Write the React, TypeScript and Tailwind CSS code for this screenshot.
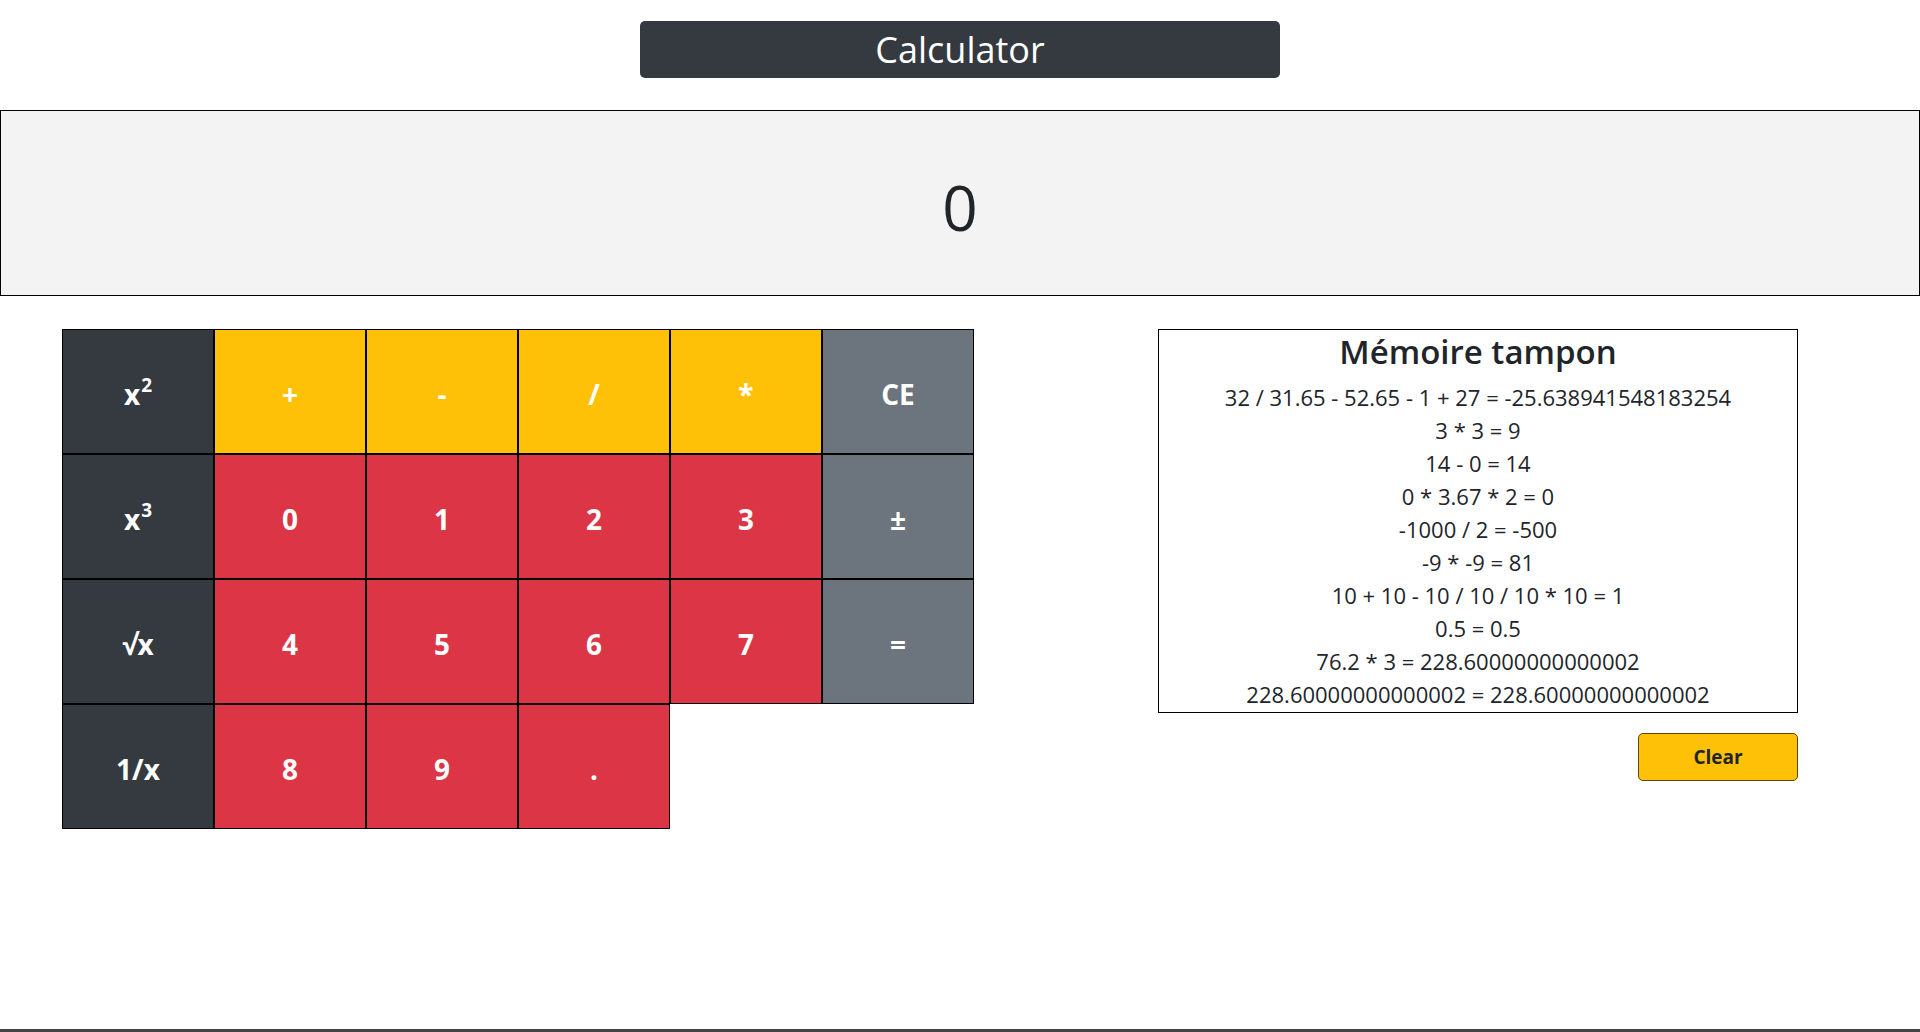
import type { ReactNode } from 'react';

type Key = { label: ReactNode; tone: 'dark' | 'yellow' | 'red' | 'gray' };

const toneClass: Record<Key['tone'], string> = {
  dark: 'bg-[#343a40]',
  yellow: 'bg-[#ffc107]',
  red: 'bg-[#dc3545]',
  gray: 'bg-[#6c757d]',
};

const Pow = ({ n }: { n: string }) => (
  <span>
    x<sup className="text-[19px] relative -top-[13px] ml-[1px]">{n}</sup>
  </span>
);

const rows: Key[][] = [
  [
    { label: <Pow n="2" />, tone: 'dark' },
    { label: '+', tone: 'yellow' },
    { label: '-', tone: 'yellow' },
    { label: '/', tone: 'yellow' },
    { label: '*', tone: 'yellow' },
    { label: 'CE', tone: 'gray' },
  ],
  [
    { label: <Pow n="3" />, tone: 'dark' },
    { label: '0', tone: 'red' },
    { label: '1', tone: 'red' },
    { label: '2', tone: 'red' },
    { label: '3', tone: 'red' },
    { label: '±', tone: 'gray' },
  ],
  [
    { label: '√x', tone: 'dark' },
    { label: '4', tone: 'red' },
    { label: '5', tone: 'red' },
    { label: '6', tone: 'red' },
    { label: '7', tone: 'red' },
    { label: '=', tone: 'gray' },
  ],
  [
    { label: '1/x', tone: 'dark' },
    { label: '8', tone: 'red' },
    { label: '9', tone: 'red' },
    { label: '.', tone: 'red' },
  ],
];

const history = [
  '32 / 31.65 - 52.65 - 1 + 27 = -25.638941548183254',
  '3 * 3 = 9',
  '14 - 0 = 14',
  '0 * 3.67 * 2 = 0',
  '-1000 / 2 = -500',
  '-9 * -9 = 81',
  '10 + 10 - 10 / 10 / 10 * 10 = 1',
  '0.5 = 0.5',
  '76.2 * 3 = 228.60000000000002',
  '228.60000000000002 = 228.60000000000002',
];

export default function App() {
  return (
    <div className="min-h-[1032px] flex flex-col bg-white text-[#212529] font-['Open_Sans',sans-serif]">
      <div className="flex justify-center pt-[21px]">
        <h1 className="w-[640px] h-[57px] rounded-[5px] bg-[#343a40] text-white text-[36px] leading-[57px] text-center">
          Calculator
        </h1>
      </div>

      <div className="mt-[32px] h-[186px] border border-black bg-[#f3f3f3] flex items-center justify-center">
        <span className="text-[62px] leading-none mt-[8px]">0</span>
      </div>

      <div className="flex items-start pl-[62px] pr-[122px] mt-[33px]">
        <div className="flex flex-col">
          {rows.map((row, i) => (
            <div key={i} className="flex">
              {row.map((key, j) => (
                <button
                  key={j}
                  className={`w-[152px] h-[125px] pt-[5px] border border-black text-white font-bold text-[28px] flex items-center justify-center ${toneClass[key.tone]}`}
                >
                  {key.label}
                </button>
              ))}
            </div>
          ))}
        </div>

        <div className="ml-auto w-[640px] flex flex-col items-end">
          <div className="w-full h-[384px] border border-black text-center overflow-hidden">
            <h3 className="text-[33px] font-semibold leading-[38px] mt-[3px] mb-[10px]">Mémoire tampon</h3>
            {history.map((line, i) => (
              <p key={i} className="text-[22px] leading-[33px]">
                {line}
              </p>
            ))}
          </div>
          <button className="mt-[20px] w-[160px] h-[48px] rounded-[5px] border border-[#5c4600] bg-[#ffc107] text-[#212529] font-bold text-[19px]">
            Clear
          </button>
        </div>
      </div>

      <div className="mt-auto h-[3px] bg-[#444]" />
    </div>
  );
}
